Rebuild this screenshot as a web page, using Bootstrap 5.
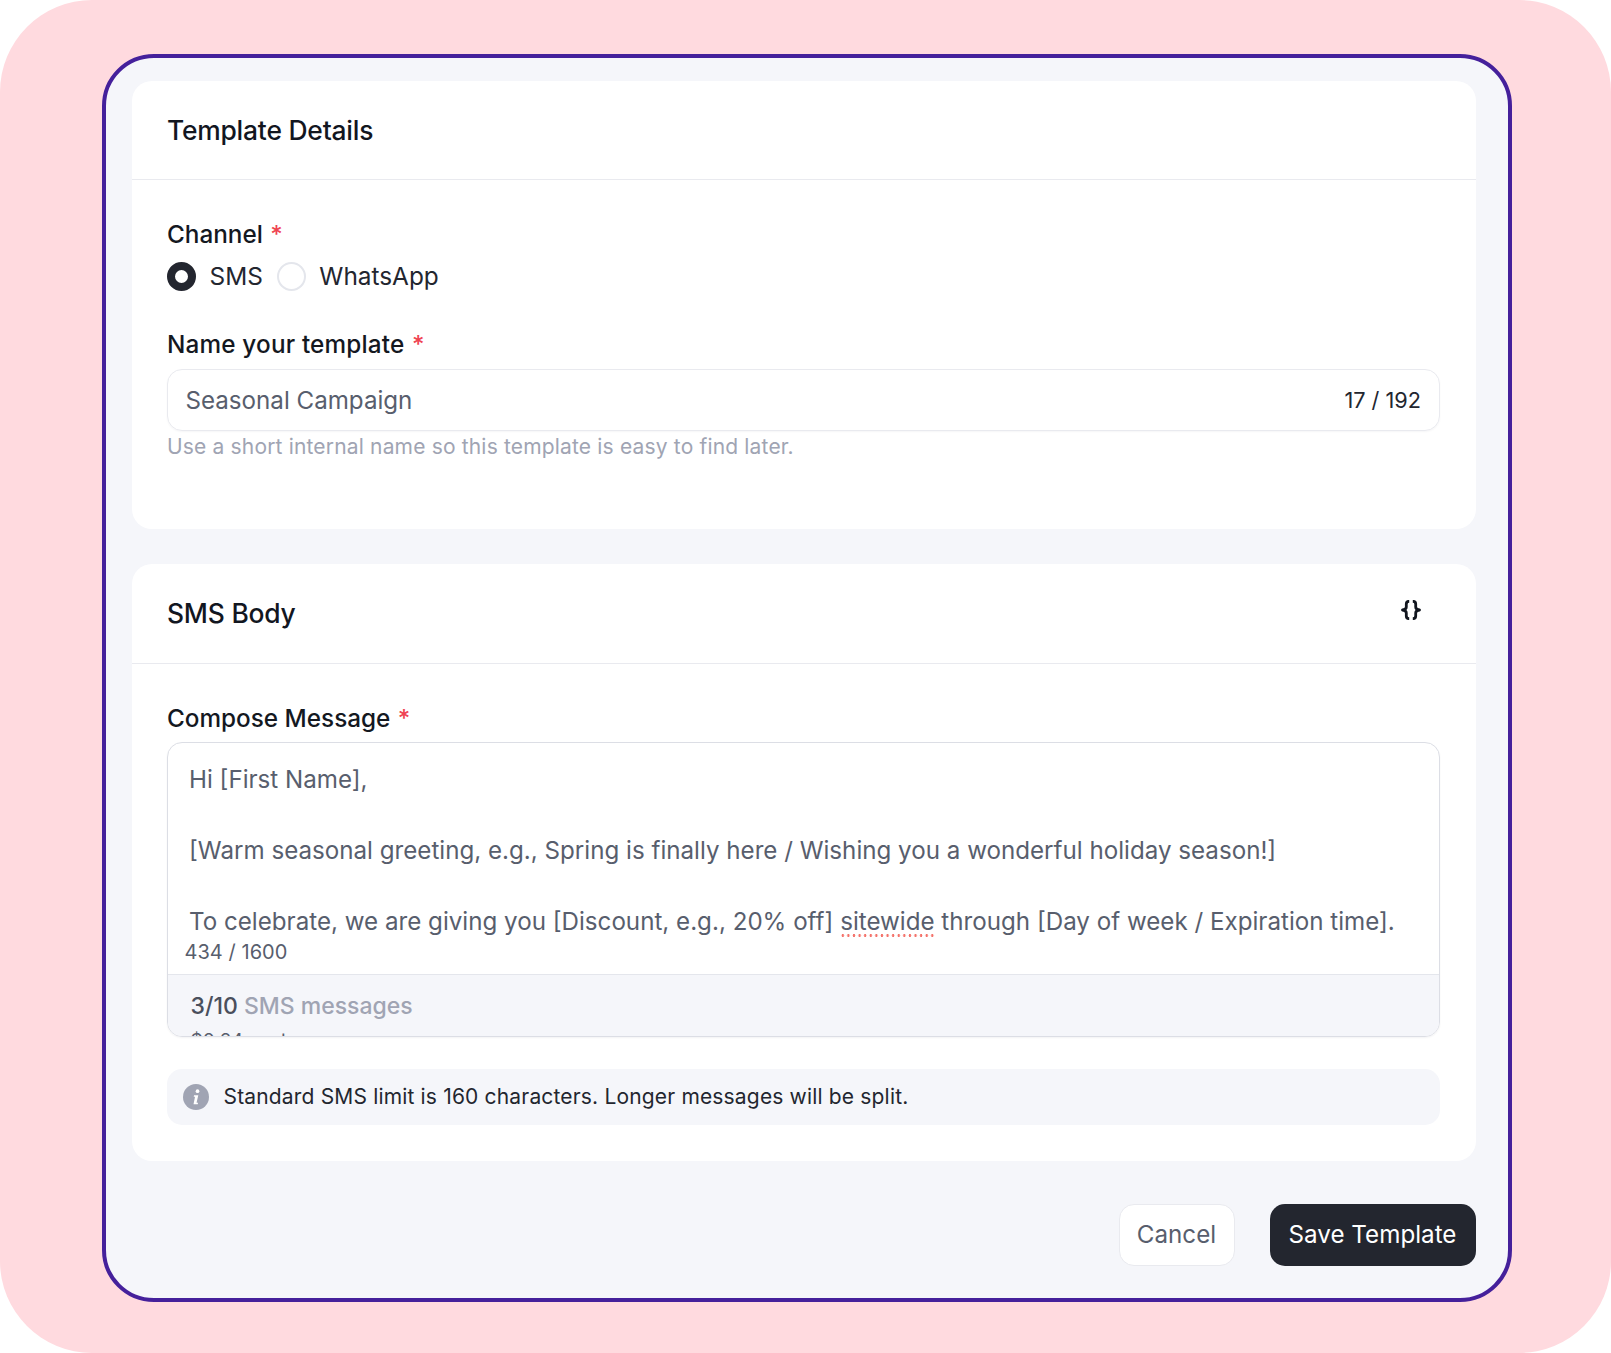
<!doctype html>
<html lang="en">
<head>
<meta charset="utf-8">
<title>Template</title>
<link href="https://cdn.jsdelivr.net/npm/bootstrap@5.3.0/dist/css/bootstrap.min.css" rel="stylesheet">
<style>
html,body{margin:0;background:#fff;}
body{font-family:Inter,"Liberation Sans",sans-serif;color:#12161f;overflow:hidden;}
.stage{width:1611px;height:1353px;background:#ffdadf;border-radius:92px;padding:54px 99px 51px 102px;}
.frame{height:100%;background:#f5f6fa;border:4.5px solid #45209b;border-radius:52px;padding:22.5px 32.5px 0 25.5px;}
.panel{background:#fff;border-radius:20px;}
.panel-one{height:448px;margin-bottom:35px;}
.panel-two{height:597px;}
.panel-head{padding:0 35.5px;border-bottom:1.5px solid #e9eaef;font-size:26.4px;font-weight:500;letter-spacing:-.2px;color:#12161f;}
.head-one{height:99.5px;padding-top:30.5px;}
.head-two{height:100px;padding-top:30.5px;display:flex;justify-content:space-between;}
.curly{margin:5.5px 19px 0 0;width:20px;height:20px;flex:none;}
.panel-body-one{padding:38px 36px 0 35.5px;}
.panel-body-two{padding:38px 36px 0 35.5px;}
.fld-label{font-size:24.3px;font-weight:500;line-height:32px;color:#14181f;margin:0;}
.fld-label.roomy{letter-spacing:.17px;}
.req{color:#ef4452;font-size:24px;margin-left:1px;}
.radio-dot{width:29px;height:29px;border-radius:50%;background:#fff;border:2px solid #e4e6ec;flex:none;}
.radio-dot.on{border:8px solid #23262f;}
.radio-text{font-size:24.4px;line-height:32px;color:#23262f;margin-left:13.5px;}
.radio-text.first{margin-right:14px;}
.choices{margin-top:9px;margin-bottom:36px;height:32px;}
.name-box{height:62px;margin-top:8px;border:1.5px solid #e9eaef;border-radius:15px;padding:1.5px 17.5px 0 17.5px;font-size:24.15px;color:#585e6d;box-shadow:0 1px 2px rgba(20,20,40,.04);}
.counter{font-size:21.7px;color:#23262f;}
.hint{font-size:21px;line-height:28px;margin-top:2px;color:#a0a4b3;letter-spacing:.17px;}
.compose{margin-top:7px;height:295px;border:1.5px solid #dcdee5;border-radius:15px;overflow:hidden;box-shadow:0 1px 2px rgba(20,20,40,.05);}
.compose-text{height:231px;padding:19px 21px 0;font-size:24.17px;line-height:35.5px;color:#585e6d;white-space:nowrap;position:relative;overflow:hidden;}
.compose-text p{margin:0;height:35.5px;}
.spell{background-image:radial-gradient(circle,#f4736b 1.15px,transparent 1.5px);background-size:5.6px 3px;background-repeat:repeat-x;background-position:0 100%;padding-bottom:1px;}
.compose-count{position:absolute;left:16.5px;bottom:9px;font-size:20px;line-height:26px;color:#585e6d;letter-spacing:.05px;}
.compose-foot{height:62px;background:#f5f6fa;border-top:1.5px solid #e4e6ec;padding:0 22px 0 22.5px;font-size:23px;line-height:32px;font-weight:500;overflow:hidden;}
.count-now{color:#4a4f5c;padding-top:15px;display:block;height:54.5px;}
.count-label{color:#a0a4b3;}
.cost{display:block;color:#585e6d;font-size:19px;line-height:24px;font-weight:400;}
.note{height:56px;margin-top:32px;background:#f5f6fa;border-radius:15px;padding:1px 15px 0 15.5px;font-size:21px;color:#23262f;letter-spacing:.17px;}
.info{width:26px;height:26px;flex:none;margin-right:15px;}
.actions{margin-top:43px;gap:35px;}
.btn.ghost{height:62px;width:116px;padding:1px 0 0;font-size:24.2px;background:#fff;color:#585e6d;border:1.5px solid #e9eaef;border-radius:15px;}
.btn.solid{height:62px;width:206px;padding:1px 0 0;font-size:24.2px;background:#23262f;color:#fff;border:0;border-radius:15px;}
</style>
</head>
<body>
<div class="stage">
  <div class="frame d-flex flex-column">
    <section class="panel panel-one">
      <div class="panel-head head-one">Template Details</div>
      <div class="panel-body-one">
        <p class="fld-label">Channel <span class="req">*</span></p>
        <div class="choices d-flex align-items-center">
          <span class="radio-dot on"></span><span class="radio-text first">SMS</span>
          <span class="radio-dot"></span><span class="radio-text">WhatsApp</span>
        </div>
        <p class="fld-label roomy">Name your template <span class="req">*</span></p>
        <div class="name-box d-flex align-items-center justify-content-between">
          <span>Seasonal Campaign</span><span class="counter">17 / 192</span>
        </div>
        <div class="hint">Use a short internal name so this template is easy to find later.</div>
      </div>
    </section>
    <section class="panel panel-two">
      <div class="panel-head head-two">
        <span>SMS Body</span>
        <svg class="curly" viewBox="0 0 20 20" fill="none" stroke="#12161f" stroke-width="2.8" stroke-linecap="butt" stroke-linejoin="round"><path d="M8.2 1.3C5.9 1.3 5.3 2.2 5.3 4v3c0 1.6-1 2.6-3.8 3 2.8.4 3.8 1.4 3.8 3v3c0 1.8.6 2.7 2.9 2.7"/><path d="M11.8 1.3c2.3 0 2.9.9 2.9 2.7v3c0 1.6 1 2.6 3.8 3-2.8.4-3.8 1.4-3.8 3v3c0 1.8-.6 2.7-2.9 2.7"/></svg>
      </div>
      <div class="panel-body-two">
        <p class="fld-label">Compose Message <span class="req">*</span></p>
        <div class="compose">
          <div class="compose-text">
            <p>Hi [First Name],</p>
            <p></p>
            <p>[Warm seasonal greeting, e.g., Spring is finally here / Wishing you a wonderful holiday season!]</p>
            <p></p>
            <p>To celebrate, we are giving you [Discount, e.g., 20% off] <span class="spell">sitewide</span> through [Day of week / Expiration time].</p>
            <span class="compose-count">434 / 1600</span>
          </div>
          <div class="compose-foot">
            <span class="count-now">3/10 <span class="count-label">SMS messages</span></span>
            <span class="cost">$0.24 cost</span>
          </div>
        </div>
        <div class="note d-flex align-items-center">
          <svg class="info" viewBox="0 0 24 24"><circle cx="12" cy="12" r="12" fill="#a0a4b3"/><circle cx="13.4" cy="6.6" r="1.7" fill="#fff"/><path d="M10.2 10.4h3.9l-1.6 7h1.4l-.3 1.4H9.7l1.4-7H9.9z" fill="#fff"/></svg>
          <span>Standard SMS limit is 160 characters. Longer messages will be split.</span>
        </div>
      </div>
    </section>
    <div class="actions d-flex justify-content-end">
      <button type="button" class="btn ghost">Cancel</button>
      <button type="button" class="btn solid">Save Template</button>
    </div>
  </div>
</div>
<script src="https://cdn.jsdelivr.net/npm/bootstrap@5.3.0/dist/js/bootstrap.bundle.min.js"></script>
</body>
</html>
